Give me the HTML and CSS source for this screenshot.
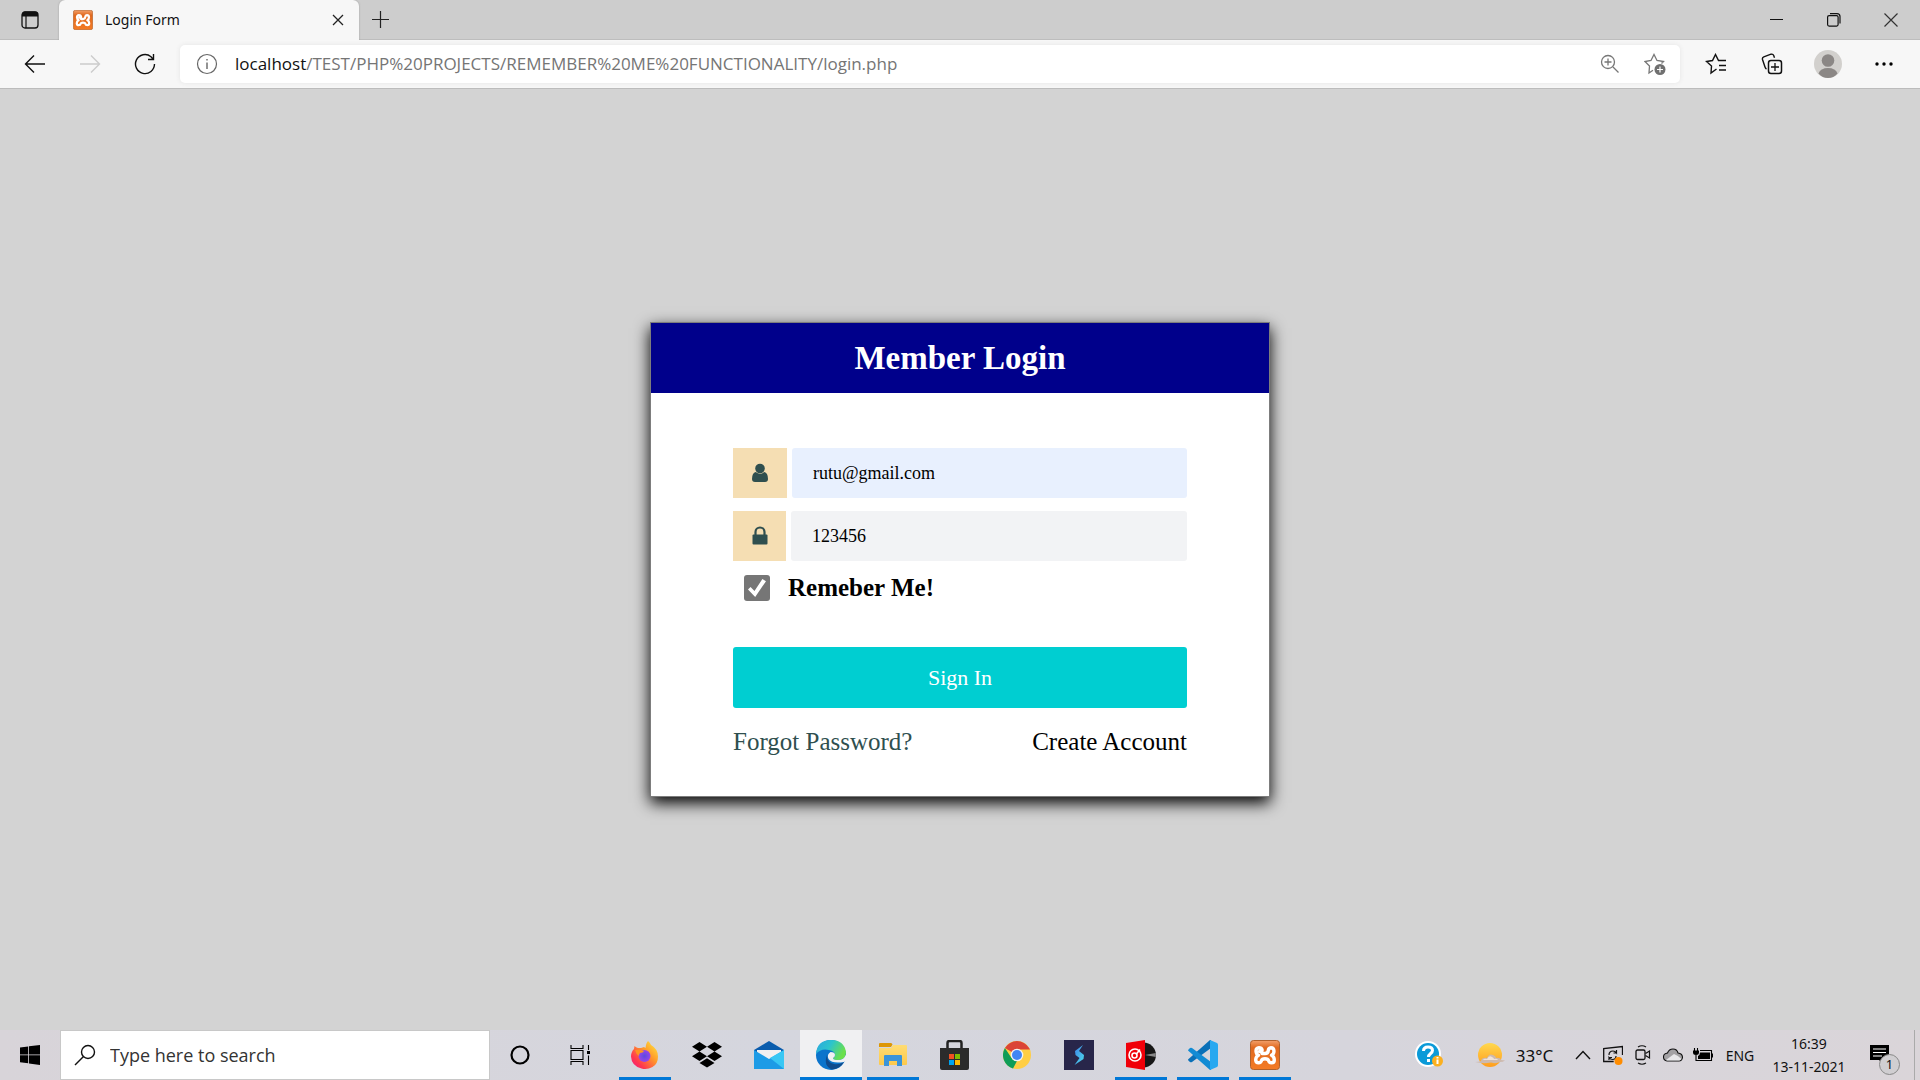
FILE: index.html
```html
<!DOCTYPE html>
<html lang="en">
<head>
<meta charset="utf-8">
<title>Login Form</title>
<link rel="stylesheet" href="styles.css">
</head>
<body>
<svg width="0" height="0" class="defs" aria-hidden="true">
  <defs>
    <linearGradient id="orange" x1="0" y1="0" x2="0" y2="1"><stop offset="0" stop-color="#f3a06a"/><stop offset=".25" stop-color="#e0691f"/><stop offset="1" stop-color="#f47b24"/></linearGradient>
    <linearGradient id="ff" x1="1" y1="0" x2="0" y2="1"><stop offset="0" stop-color="#fff044"/><stop offset=".4" stop-color="#ff9a2a"/><stop offset=".75" stop-color="#ff3750"/><stop offset="1" stop-color="#f0148c"/></linearGradient>
    <radialGradient id="ffCore"><stop offset="0" stop-color="#5a4be0"/><stop offset="1" stop-color="#9a45e8"/></radialGradient>
    <linearGradient id="edgeTop" x1="0" y1="0" x2="1" y2=".4"><stop offset="0" stop-color="#2ba6e0"/><stop offset=".5" stop-color="#2cc4cd"/><stop offset="1" stop-color="#6be04c"/></linearGradient>
    <linearGradient id="sun" x1="0" y1="0" x2="0" y2="1"><stop offset="0" stop-color="#ffd84f"/><stop offset="1" stop-color="#ff9d1c"/></linearGradient>
    <linearGradient id="folder" x1="0" y1="0" x2="0" y2="1"><stop offset="0" stop-color="#ffdc73"/><stop offset="1" stop-color="#fdc94b"/></linearGradient>
    <linearGradient id="bolt" x1="0" y1="0" x2="1" y2="1"><stop offset="0" stop-color="#3b7fe8"/><stop offset="1" stop-color="#4fe0ea"/></linearGradient>
    <symbol id="xampp" viewBox="0 0 30 30">
      <rect x=".5" y=".5" width="29" height="29" rx="3" fill="url(#orange)" stroke="#b0612c"/>
      <path d="M9.500 11.500h.5Q12.500 11.500 12 9.500 11.500 7.800 9 7.800 6 8 6 11 6.300 14.500 8.500 15.300 5.700 16.500 5.700 20 6 22.800 8.500 22.800 11 22.800 11.500 20.500 12 18.800 15 18.800T18.500 20.500Q19 22.800 21.500 22.800 24.300 22.800 24.300 20 24.300 16.500 21.500 15.300 24 14 24 11 23.800 7.800 21 7.800 18.500 8 18.300 10.500 18 13.500 15 13.500H12" fill="none" stroke="#fff" stroke-width="3.400" stroke-linecap="round" stroke-linejoin="round"/>
    </symbol>
  </defs>
</svg>

<header class="browser">
  <div class="tabs">
    <button class="tab-menu" aria-label="Tab actions"><svg width="20" height="20" viewBox="0 0 20 20"><rect x="2" y="2" width="16" height="16" rx="3" fill="none" stroke="#111" stroke-width="1.300"/><path d="M2 6.500V4q0-2.500 3-2.500h10q3 0 3 2.500v2.500z" fill="#111"/><path d="M6 6v12" stroke="#111" stroke-width="1.200"/></svg></button>
    <div class="tab">
      <svg width="20" height="20"><use href="#xampp"/></svg>
      <span class="tab-title">Login Form</span>
      <button class="tab-close" aria-label="Close tab"><svg width="12" height="12" viewBox="0 0 12 12"><path d="M1 1l10 10M11 1L1 11" stroke="#222" stroke-width="1.300"/></svg></button>
    </div>
    <button class="new-tab" aria-label="New tab"><svg width="18" height="18" viewBox="0 0 18 18"><path d="M8.500 0v17M0 8.500h17" stroke="#222" stroke-width="1.200"/></svg></button>
    <div class="window-controls">
      <button aria-label="Minimize"><svg width="14" height="14" viewBox="0 0 14 14"><path d="M0 6.500h13" stroke="#111"/></svg></button>
      <button aria-label="Restore"><svg width="14" height="14" viewBox="0 0 14 14"><rect x=".6" y="2.600" width="10.500" height="10.500" rx="1.500" fill="none" stroke="#111" stroke-width="1.200"/><path d="M3 .6h7q3 0 3 3v7" fill="none" stroke="#111" stroke-width="1.200"/></svg></button>
      <button aria-label="Close"><svg width="14" height="14" viewBox="0 0 14 14"><path d="M.5.5l13 13M13.500.5l-13 13" stroke="#333" stroke-width="1.200"/></svg></button>
    </div>
  </div>
  <div class="toolbar">
    <div class="nav">
      <button aria-label="Back"><svg width="22" height="20" viewBox="0 0 22 20"><path d="M21 10H1.500M10 1.500L1.500 10l8.500 8.500" fill="none" stroke="#111" stroke-width="1.400"/></svg></button>
      <button aria-label="Forward" disabled><svg width="22" height="20" viewBox="0 0 22 20"><path d="M1 10h19.500M12 1.500l8.500 8.500-8.500 8.500" fill="none" stroke="#ccc" stroke-width="1.400"/></svg></button>
      <button aria-label="Refresh"><svg width="22" height="22" viewBox="0 0 22 22"><path d="M20.500 11A9.500 9.500 0 1 1 17 3.700l2 2.300M19.500 1v5.500H14" fill="none" stroke="#111" stroke-width="1.400"/></svg></button>
    </div>
    <div class="address">
      <svg width="22" height="22" viewBox="0 0 22 22"><circle cx="11" cy="11" r="9.500" fill="none" stroke="#666" stroke-width="1.200"/><path d="M11 9.500V16M11 6v1.500" stroke="#666" stroke-width="1.400"/></svg>
      <span class="url"><b>localhost</b>/TEST/PHP%20PROJECTS/REMEMBER%20ME%20FUNCTIONALITY/login.php</span>
      <button aria-label="Zoom"><svg width="20" height="20" viewBox="0 0 20 20"><path d="M13 13l5.500 5.500M8 4.500v7M4.500 8h7" stroke="#777" stroke-width="1.300"/><circle cx="8" cy="8" r="6.500" fill="none" stroke="#777" stroke-width="1.300"/></svg></button>
      <button aria-label="Add to favorites"><svg width="22" height="22" viewBox="0 0 22 22"><path d="M9 17.200L5 20l.5-7L1 8.500l6-1L10 1.500l3 6 6.500 1-2 2" fill="none" stroke="#777" stroke-width="1.300"/><circle cx="16" cy="16.500" r="5.500" fill="#707070"/><path d="M16 13.500v6M13 16.500h6" stroke="#fff" stroke-width="1.200"/></svg></button>
    </div>
    <div class="tools">
      <button aria-label="Favorites"><svg width="22" height="22" viewBox="0 0 22 22"><path d="M11.500 16L6 20l.5-7L1.500 8.500l6-1L10.500 1.500l3 6H21M14 12.500h7M14 17h7" fill="none" stroke="#111" stroke-width="1.400"/></svg></button>
      <button aria-label="Collections"><svg width="22" height="22" viewBox="0 0 22 22"><path d="M5.500 16Q4.500 15.500 4 14L1.500 6.500q-.5-2 1.300-2.700L10 1.200q2-.5 2.700 1.300l.8 2.200" fill="none" stroke="#111" stroke-width="1.400"/><rect x="7.500" y="7.500" width="13" height="13" rx="2.500" fill="none" stroke="#111" stroke-width="1.500"/><path d="M14 10v8M10 14h8" stroke="#111" stroke-width="1.300"/></svg></button>
      <button aria-label="Profile"><svg width="28" height="28" viewBox="0 0 28 28"><circle cx="14" cy="14" r="14" fill="#d2d0cd"/><circle cx="14" cy="10.500" r="6.300" fill="#8b8785"/><path d="M4.500 23.500q2-5.500 9.500-5.500t9.500 5.500Q19.500 28 14 28t-9.500-4.500z" fill="#8b8785"/></svg></button>
      <button aria-label="Settings and more"><svg width="18" height="4" viewBox="0 0 18 4"><circle cx="2" cy="2" r="1.700"/><circle cx="9" cy="2" r="1.700"/><circle cx="16" cy="2" r="1.700"/></svg></button>
    </div>
  </div>
</header>

<main class="page">
  <form class="card">
    <h1>Member Login</h1>
    <div class="card-body">
      <div class="field">
        <label class="addon" for="email" aria-label="Email"><svg width="16" height="20" viewBox="0 0 16 20"><circle cx="8" cy="5.500" r="4.800"/><path d="M3.700 9q4.300 3.600 8.600 0Q16 10 16 16q0 3-3 3H3q-3 0-3-3 0-6 3.700-7z"/></svg></label>
        <input class="autofilled" id="email" type="email" value="rutu@gmail.com">
      </div>
      <div class="field">
        <label class="addon narrow" for="password" aria-label="Password"><svg width="16" height="20" viewBox="0 0 16 20"><path d="M3.500 9V6a4.500 4.500 0 0 1 9 0v3" fill="none" stroke="#2f4f4f" stroke-width="2.200"/><rect x=".5" y="8.500" width="15" height="10" rx="1"/></svg></label>
        <input id="password" type="text" value="123456">
      </div>
      <div class="remember">
        <input id="remember" type="checkbox" checked>
        <label for="remember">Remeber Me!</label>
      </div>
      <button class="submit" type="submit">Sign In</button>
      <div class="links">
        <a class="forgot" href="#">Forgot Password?</a>
        <a href="#">Create Account</a>
      </div>
    </div>
  </form>
</main>

<footer class="taskbar">
  <button class="start" aria-label="Start"><svg width="20" height="20" viewBox="0 0 20 20"><path d="M0 2.500L8.200 1.400v8H0zM9 1.300L20 0v9.400H9zM0 10.300h8.200v8L0 17.200zM9 10.300h11V20L9 18.500z"/></svg></button>
  <label class="search">
    <svg width="22" height="22" viewBox="0 0 22 22"><circle cx="14" cy="8" r="6.500" fill="none" stroke="#111" stroke-width="1.400"/><path d="M9.500 12.500L1 21" stroke="#111" stroke-width="1.500"/></svg>
    <input type="text" placeholder="Type here to search" aria-label="Search">
  </label>
  <div class="apps">
    <button class="app plain" aria-label="Cortana"><svg width="20" height="20" viewBox="0 0 20 20"><circle cx="10" cy="10" r="8.500" fill="none" stroke="#000" stroke-width="2.200"/></svg></button>
    <button class="app plain" aria-label="Task view"><svg width="20" height="20" viewBox="0 0 20 20"><path d="M1 0v3.500h12V0M1 20v-3.500h12V20M1 5.500h12v9H1zM18.500 0v5M18.500 10.500V20" fill="none" stroke="#000" stroke-width="1.100"/><path d="M17 6h3v3h-3z"/></svg></button>
    <button class="app open" aria-label="Firefox"><svg width="30" height="30" viewBox="0 0 30 30"><path d="M18 1q2 1.500 3 4 7 4 7 11.500Q28 24 22.500 27t-11 1.500Q1.500 26 1 16.500 1 12 4 9l.5-3Q6 7.500 8 8h3l3-1 1.500 1q.5-5 2.500-7z" fill="url(#ff)"/><circle cx="14.500" cy="16" r="6" fill="url(#ffCore)"/><path d="M5 10q4-1 9 1-1 2-4 2-1 1-1 3Q6 14 5 10z" fill="#ff9420"/></svg></button>
    <button class="app" aria-label="Dropbox"><svg width="30" height="26" viewBox="0 0 30 26"><path d="M7.500 0L15 4.700 7.500 9.400 0 4.700zM22.500 0L30 4.700l-7.500 4.700L15 4.700zM7.500 9.600L15 14.300 7.500 19 0 14.300zM22.500 9.600l7.500 4.700-7.500 4.700-7.500-4.700zM15 16.200l7.500 4.700L15 25.600l-7.500-4.700z"/></svg></button>
    <button class="app" aria-label="Mail"><svg width="30" height="30" viewBox="0 0 30 30"><path d="M0 10L15 1l15 9v6H0z" fill="#0a5cad"/><path d="M3 10h24v10H3z" fill="#f2f0f0"/><path d="M0 10l15 9 15-9v19H0z" fill="#1d9be6"/><path d="M30 10L16 18l14 11z" fill="#38c7f4"/></svg></button>
    <button class="app open active" aria-label="Edge"><svg width="30" height="30" viewBox="0 0 30 30"><circle cx="15" cy="15" r="15" fill="#0b74cc"/><path d="M0 14Q1 0 15 0q13 0 15 12 0 8-8 8-5 0-5-2 2-1 2-3 0-4-6-5Q5 8 0 14z" fill="url(#edgeTop)"/><path d="M11 15q0 8 7 9 5 1 10-2-4 7-12 7.500Q7 26 11 15z" fill="#114b8c"/><path d="M14.500 12q-4 2.500-2 7Q16 24 28 22l2-1.500v-6Q28 20 22 20q-5 0-5-2 2-1 2-3 0-3-4.500-3z" fill="#f0f0f2"/></svg></button>
    <button class="app open" aria-label="File Explorer"><svg width="28" height="26" viewBox="0 0 28 26"><path d="M0 4V2q0-1 1-1h11q1 0 1.500 1.500L12 5H0z" fill="#dd9705"/><path d="M0 6h12l2-3h13q1 0 1 1v18q0 1-1 1H1q-1 0-1-1z" fill="url(#folder)"/><path d="M5 23V14q0-1 1-1h16q1 0 1 1v10h-5v-5h-8v5H5z" fill="#3b94d9"/></svg></button>
    <button class="app" aria-label="Microsoft Store"><svg width="30" height="30" viewBox="0 0 30 30"><path d="M7.500 9V3q0-2 2-2h10q2 0 2 2v6" fill="none" stroke="#222" stroke-width="2.500"/><path d="M0 8h29v20q0 2-2 2H2q-2 0-2-2z" fill="#2b2b2b"/><path d="M9 14h5v5H9z" fill="#f25022"/><path d="M15 14h5v5h-5z" fill="#7fba00"/><path d="M9 20h5v5H9z" fill="#00a4ef"/><path d="M15 20h5v5h-5z" fill="#ffb900"/></svg></button>
    <button class="app" aria-label="Chrome"><svg width="28" height="28" viewBox="0 0 28 28"><circle cx="14" cy="14" r="14" fill="#ffce44"/><path d="M14 14L1.900 7A14 14 0 0 1 26.100 7L27 8.500H14z" fill="#db4437"/><path d="M1.900 7L8.500 17l5.500 3-4 7.500A14 14 0 0 1 1.900 7z" fill="#0f9d58"/><circle cx="14" cy="14" r="6.300" fill="#f3f3f3"/><circle cx="14" cy="14" r="5" fill="#4285f4"/></svg></button>
    <button class="app" aria-label="Stackby"><svg width="30" height="30" viewBox="0 0 30 30"><path d="M0 0h30v30H0z" fill="#28264a"/><path d="M19 5l-8 6 .5 4 4 3-5 7 9-6 .5-4-5-4z" fill="url(#bolt)"/></svg></button>
    <button class="app open" aria-label="Music player"><svg width="30" height="30" viewBox="0 0 30 30"><circle cx="17.500" cy="15" r="12.500" fill="#171717"/><path d="M19 15l10.800-2v4z" fill="#888"/><path d="M0 3l19-3v30L0 27z" fill="#f00009"/><circle cx="9" cy="15" r="6" fill="none" stroke="#fff" stroke-width="1.600"/><circle cx="8.500" cy="15.500" r="2.500" fill="none" stroke="#fff" stroke-width="1.600"/><path d="M10 14.500l4-5" stroke="#fff" stroke-width="1.500"/></svg></button>
    <button class="app open" aria-label="Visual Studio Code"><svg width="30" height="30" viewBox="0 0 30 30"><path d="M0 19.500q0 1 2 2.500 1 .5 2 0L23 8V0h-1z" fill="#0a70b8"/><path d="M0 10.500Q0 9.500 2 8q1-.5 2 0l19 14v8h-1z" fill="#128bd4"/><path d="M22 0l7 3q1 .5 1 2v20q0 1.500-1 2l-7 3z" fill="#28a8f0"/></svg></button>
    <button class="app open" aria-label="XAMPP"><svg width="30" height="30"><use href="#xampp"/></svg></button>
  </div>
  <div class="tray">
    <button class="help" aria-label="Help"><svg width="28" height="28" viewBox="0 0 28 28"><circle cx="13" cy="13" r="13" fill="#fff"/><circle cx="13" cy="13" r="11" fill="#0b9ad8"/><path d="M8.500 10q0-4 4.500-4t4.500 3.500c0 3-4 3-4 6.500M13.500 18v3" fill="none" stroke="#fff" stroke-width="3"/><circle cx="22.500" cy="20" r="5.500" fill="#fbb01f"/><path d="M22.500 18.500v4.500M22.500 16v1.500" stroke="#fff" stroke-width="2"/></svg></button>
    <button class="weather"><svg width="30" height="24" viewBox="0 0 30 24"><circle cx="15" cy="12" r="12" fill="url(#sun)"/><path d="M0 19q4 0 6-1 1-4 6-3 2-5 6-3 3 1 3 3 4-1 5 2l4 .5q-2 1.500-5 1.500-4 2-9 .5-8 1.500-16-.5z" fill="#cdb9ad"/><path d="M8 17q1-2 4-1 2-4 5-2 2 1 2 2 3-1 4 1z" fill="#efe2d8"/></svg>33°C</button>
    <button aria-label="Show hidden icons"><svg width="16" height="10" viewBox="0 0 16 10"><path d="M1 9l7-7.500L15 9" fill="none" stroke="#111" stroke-width="1.400"/></svg></button>
    <button aria-label="Windows Update"><svg width="20" height="20" viewBox="0 0 20 20"><path d="M19.500 10V1.500L.7 3.500v13h10" fill="none" stroke="#111" stroke-width="1.300"/><path d="M6 10q0-4 4-4 2 0 3.500 2V5M13.500 8h-3M13 11q0 3.500-3.500 3.500-2 0-3.500-2V15M6 12.500h3" fill="none" stroke="#111" stroke-width="1.200"/><circle cx="15.500" cy="16" r="4" fill="#ff8c00"/></svg></button>
    <button aria-label="Camera"><svg width="16" height="20" viewBox="0 0 16 20"><path d="M3 2q4-2.500 8 0M3 18q4 2.500 8 0M10.500 8.500l4-2.500v7l-4-2.500" fill="none" stroke="#111" stroke-width="1.200"/><rect x="1" y="5" width="9" height="9.500" rx="1.500" fill="none" stroke="#111" stroke-width="1.300"/></svg></button>
    <button aria-label="OneDrive"><svg width="20" height="14" viewBox="0 0 20 14"><path d="M4 13q-3.500-.5-3.500-4t4-4Q6 1 10 1q4 0 5 4 4.500.5 4.500 4.500Q19 13 16 13z" fill="#a3a1a4" stroke="#111" stroke-width="1.100"/><path d="M3 12l8-6q5 2 7.500 5l-2 1.500H4z" fill="#e8e7ea"/></svg></button>
    <button aria-label="Battery"><svg width="20" height="16" viewBox="0 0 20 16"><path d="M1.500 1v3M4.500 1v3M3 8v5.500h2M7 3.500h11.500v10H5" fill="none" stroke="#000" stroke-width="1.100"/><path d="M0 3.500h6v2Q6 8 3 8T0 5.500zM7 5.500h10v6.500H5V9q2-1 2-3.500zM19 6.500h1v4h-1z"/></svg></button>
    <button class="lang">ENG</button>
    <button class="clock"><span>16:39</span><span>13-11-2021</span></button>
    <button class="notify" aria-label="1 new notification"><svg width="32" height="32" viewBox="0 0 32 32"><path d="M1 6h19v15h-6v4l-4-4H1z"/><path d="M4 10h13M4 13.500h13M4 17h9" stroke="#fff" stroke-width="1.200"/></svg><span class="badge">1</span></button>
    <button class="desktop" aria-label="Show desktop"></button>
  </div>
</footer>
</body>
</html>
```
FILE: styles.css
```css
* { box-sizing: border-box; }

body {
  margin: 0;
  min-height: 100vh;
  display: flex;
  flex-direction: column;
  background: lightgray;
  font-family: "Noto Sans", "Open Sans", sans-serif;
  color: #111;
}

button {
  display: flex;
  align-items: center;
  justify-content: center;
  padding: 0;
  border: 0;
  background: none;
  font: inherit;
  color: inherit;
}

svg { flex: none; display: block; }
.defs { position: absolute; }

/* Browser frame */
.tabs {
  display: flex;
  height: 40px;
  background: #cdcdcd;
  box-shadow: inset 0 -1px #bdbdbd;
}
.tab-menu { width: 59px; }
.tab {
  position: relative;
  display: flex;
  align-items: center;
  gap: 12px;
  width: 300px;
  padding: 0 15px 1px 14px;
  background: #f7f7f7;
  border-radius: 6px 6px 0 0;
  box-shadow: 0 0 2px #999;
  clip-path: inset(0 -6px 0 -6px);
}
.tab-title { flex: 1; font-size: 14px; }
.new-tab { width: 44px; padding-bottom: 1px; }
.window-controls { display: flex; margin-left: auto; padding: 0 1px 1px 0; }
.window-controls button { width: 57px; }

.toolbar {
  display: flex;
  align-items: center;
  height: 49px;
  padding: 0 8px 0 7px;
  gap: 8px;
  background: #f7f7f7;
  border-bottom: 1px solid #bcbcbc;
}
.nav, .tools { display: flex; }
.nav button { width: 55px; height: 38px; }
.tools button { width: 56px; height: 38px; }
.address {
  flex: 1;
  display: flex;
  align-items: center;
  height: 38px;
  padding: 0 12px 0 16px;
  background: #fff;
  border-radius: 5px;
  box-shadow: 0 0 5px #e4e4e4;
}
.address button { width: 26px; margin-left: 19px; }
.url {
  flex: 1;
  margin-left: 17px;
  padding-bottom: 2px;
  font-family: "Open Sans", "Noto Sans", sans-serif;
  font-size: 17px;
  color: #757575;
}
.url b { font-weight: 400; color: #111; }

/* Login page */
.page {
  flex: 1;
  display: flex;
  align-items: center;
  justify-content: center;
  font-family: "Liberation Serif", serif;
}
.card {
  width: 620px;
  margin: 0;
  border: 1px solid #7d7d7d;
  background: #fff;
  box-shadow: 0 6px 15px #000;
}
.card h1 {
  margin: 0;
  background: darkblue;
  color: #fff;
  text-align: center;
  font-size: 33px;
  line-height: 70px;
}
.card-body { padding: 55px 82px 37px; }
.field { display: flex; gap: 5px; height: 50px; margin-bottom: 13px; }
.addon {
  display: flex;
  align-items: center;
  justify-content: center;
  width: 54px;
  background: wheat;
  fill: darkslategray;
}
.narrow { width: 53px; }
.field input {
  flex: 1;
  min-width: 0;
  padding: 0 21px;
  border: 0;
  border-radius: 3px;
  background: #f2f3f5;
  font: 18px "Liberation Serif", serif;
  color: #000;
}
.field .autofilled { background: #e8f0fe; }
.remember {
  display: flex;
  align-items: center;
  gap: 18px;
  height: 28px;
  padding-left: 11px;
  font-size: 25px;
  font-weight: bold;
  color: #000;
}
.remember input {
  width: 26px;
  height: 26px;
  margin: 0;
  appearance: none;
  display: grid;
  place-items: center;
  border-radius: 3px;
  background: #767676;
}
.remember input::before {
  content: "";
  width: 18px;
  height: 18px;
  background: #fff;
  clip-path: polygon(0 58%, 14% 44%, 36% 66%, 80% 0, 100% 12%, 40% 100%);
}
.submit {
  width: 100%;
  height: 61px;
  margin: 45px 0 17px;
  border-radius: 3px;
  background: darkturquoise;
  color: #fff;
  font-size: 22px;
}
.links {
  display: flex;
  justify-content: space-between;
  font-size: 25px;
  line-height: 34px;
}
.links a { color: #000; text-decoration: none; }
.links .forgot { color: darkslategray; }

/* Taskbar */
.taskbar {
  display: flex;
  height: 50px;
  background: linear-gradient(90deg, #d8d4d9, #d5d6de 40%, #d6d5dc 70%, #dad5d9);
}
.start { width: 60px; }
.search {
  display: flex;
  align-items: center;
  gap: 14px;
  width: 430px;
  padding: 0 13px;
  border: 1px solid #c8c8c8;
  background: #fff;
}
.search input {
  flex: 1;
  min-width: 0;
  padding: 0;
  border: 0;
  font: 18px "Open Sans", sans-serif;
}
.search input::placeholder { color: #333; opacity: 1; }
.apps { display: flex; }
.app { width: 52px; margin: 0 5px; }
.plain { width: 60px; margin: 0; }
.plain + .open { margin-left: 9px; }
.open { box-shadow: inset 0 -3px #0078d7; }
.active { width: 62px; margin: 0; background: #f0f0f2; }
.tray { display: flex; margin-left: auto; font-size: 17px; }
.tray button { width: 30px; }
.tray .help { width: 62px; }
.tray .weather { width: 108px; gap: 11px; }
.tray .lang { width: 44px; font-size: 14px; }
.tray .clock {
  width: 94px;
  flex-direction: column;
  font-size: 14px;
  line-height: 23px;
}
.tray .notify { position: relative; width: 58px; }
.badge {
  position: absolute;
  right: 14px;
  bottom: 5px;
  width: 21px;
  height: 21px;
  border: 1px solid #888;
  border-radius: 50%;
  background: #d0ced1;
  font-size: 13px;
  line-height: 19px;
}
.tray .desktop { width: 6px; border-left: 1px solid #aaa; }
```
